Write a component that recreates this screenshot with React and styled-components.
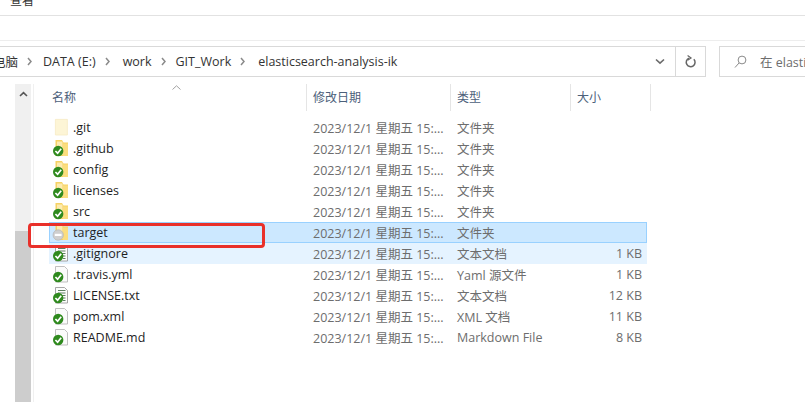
import React from 'react';
import styled, { createGlobalStyle } from 'styled-components';

const Global = createGlobalStyle`
  html, body { margin: 0; padding: 0; background: #fff; overflow: hidden; }
  body { font-family: "Open Sans", "Noto Sans CJK SC", sans-serif; }
  #root { width: 805px; height: 402px; }
`;
const Page = styled.div`
  width: 805px; height: 402px; display: flex; flex-direction: column; overflow: hidden; position: relative; background: #fff;
`;
const MenuBar = styled.div`
  height: 15px; border-bottom: 1px solid #e2e2e2; flex: none; padding-left: 10px; overflow: hidden;
`;
const MenuTab = styled.div`
  font-size: 12px; line-height: 16px; margin-top: -8px; color: #333; font-family: "Noto Sans CJK SC", sans-serif;
`;
const Ribbon = styled.div`
  height: 24px; border-bottom: 1px solid #ededed; flex: none;
`;
const AddressRow = styled.div`
  display: flex; height: 31px; margin-top: 5px; flex: none; margin-left: -2px;
`;
const AddressBox = styled.div`
  width: 678px; box-sizing: border-box; border: 1px solid #d9d9d9; border-left: none; display: flex; align-items: center;
`;
const Crumbs = styled.div`
  flex: 1; display: flex; align-items: center; font-size: 12.5px; color: #333; white-space: nowrap; overflow: hidden;
`;
const Crumb = styled.span`
  margin-left: ${p => p.$gap}px; font-family: "Open Sans", "Noto Sans CJK SC", sans-serif;
`;
const ChevronWrap = styled.svg`
  margin-left: 9px; flex: none;
`;
const Dropdown = styled.div`
  width: 30px; display: flex; align-items: center; justify-content: center; flex: none;
`;
const RefreshBox = styled.div`
  width: 31px; box-sizing: border-box; border: 1px solid #d9d9d9; margin-left: -1px; display: flex; align-items: center; justify-content: center; flex: none;
`;
const SearchBox = styled.div`
  margin-left: 13px; flex: 1; box-sizing: border-box; border: 1px solid #d9d9d9; border-right: none; display: flex; align-items: center; gap: 13px; padding-left: 14px;
  font-size: 12.5px; color: #6d6d6d; white-space: nowrap; min-width: 0; overflow: hidden; margin-right: -10px;
`;
const Body = styled.div`
  flex: 1; display: flex; margin-top: 7px; min-height: 0;
`;
const Scrollbar = styled.div`
  width: 16px; margin-left: 15px; background: #f0f0f0; display: flex; flex-direction: column; flex: none;
`;
const ScrollUp = styled.div`
  height: 19px; display: flex; align-items: center; justify-content: center; flex: none;
`;
const ScrollGap = styled.div`
  height: 128px; flex: none;
`;
const ScrollThumb = styled.div`
  flex: 1; background: #cdcdcd;
`;
const Pane = styled.div`
  flex: 1; margin-left: 2px; border-left: 1px solid #f0f0f0; padding-left: 15px; min-width: 0; position: relative;
`;
const Header = styled.div`
  display: grid; grid-template-columns: 258px 144px 120px 80px; width: 602px; height: 27px;
`;
const HeaderCell = styled.div`
  border-right: 1px solid #e5e5e5; padding-left: ${p => p.$pad}px; font-size: 12px; color: #4c607a; line-height: 26px;
  font-family: "Noto Sans CJK SC", sans-serif;
`;
const SortCaret = styled.svg`
  position: absolute; left: 138px; top: 1px;
`;
const List = styled.div`
  margin-top: 6px; width: 598px;
`;
const Row = styled.div`
  display: grid; grid-template-columns: 258px 144px 120px 1fr; height: 21px; box-sizing: border-box; align-items: center;
  font-size: 12.5px;
  background: ${p => (p.$state === 'selected' ? '#cce8ff' : p.$state === 'hover' ? '#e5f3ff' : 'transparent')};
  border: 1px solid ${p => (p.$state === 'selected' ? '#99d1ff' : p.$state === 'hover' ? '#e5f3ff' : 'transparent')};
`;
const NameCell = styled.div`
  display: flex; align-items: center; color: #1f1f1f; white-space: nowrap; padding-left: 2px; gap: 4px;
`;
const Cell = styled.div`
  color: #6d6d6d; white-space: nowrap; padding-left: ${p => p.$pad ?? 5}px;
  text-align: ${p => (p.$right ? 'right' : 'left')}; padding-right: ${p => (p.$right ? 4 : 0)}px;
`;
const Annotation = styled.div`
  position: absolute; left: 28px; top: 223px; width: 237px; height: 25px; box-sizing: border-box;
  border: 3px solid #e9302a; border-radius: 4px; pointer-events: none;
`;
const IconSvg = styled.svg`
  flex: none;
`;

function Chevron() {
  return (
    <ChevronWrap width="5" height="9" viewBox="0 0 5 9">
      <path d="M1 1 L4 4.5 L1 8" fill="none" stroke="#8a8a8a" strokeWidth="1.5" />
    </ChevronWrap>
  );
}

const Badge = ({ kind }) =>
  kind === 'ignored' ? (
    <g>
      <circle cx="6.2" cy="12" r="5.2" fill="#cfcfcf" stroke="#b0b0b0" strokeWidth="0.6" />
      <rect x="2.8" y="10.8" width="6.8" height="2.2" fill="#fff" />
    </g>
  ) : (
    <g>
      <circle cx="6.2" cy="12" r="5.2" fill="#2f8a1e" />
      <path d="M3.4 12 L5.6 14.2 L9.2 9.8" fill="none" stroke="#fff" strokeWidth="1.7" />
    </g>
  );

const FileIcon = ({ type }) => {
  let body;
  if (type === 'plainFolder') {
    body = <path d="M3.4 1.4 H15.4 V17 H3.4 Z" fill="#fdf5d6" stroke="#f6ebc4" strokeWidth="0.8" />;
  } else if (type === 'folder' || type === 'ignored') {
    body = (
      <g>
        <path d="M3.5 1 H10 L11.5 3.5 H16 V17 H3.5 Z" fill="#f6d264" />
        <path d="M5 2.5 H10.5 V16 H5 Z" fill="#fdebb0" />
        <path d="M11 4.5 H16 V17 H11 Z" fill="#fbdd7e" />
      </g>
    );
  } else if (type === 'lines') {
    body = (
      <g>
        <path d="M3.5 1.5 H12.5 L15.5 4.5 V17 H3.5 Z" fill="#fdfdfd" stroke="#909090" strokeWidth="0.8" />
        <path d="M6 4.5 H13.5 M6 7 H13.5 M9 9.5 H13.5 M11 12 H13.5 M11 14.5 H13.5" stroke="#5f7f62" strokeWidth="1" />
      </g>
    );
  } else {
    body = <path d="M3.5 1.5 H12.5 L15.5 4.5 V17 H3.5 Z" fill="#fbfbfb" stroke="#b0b0b0" strokeWidth="0.8" />;
  }
  return (
    <IconSvg width="17" height="19" viewBox="0 0 17 19">
      {body}
      {type === 'plainFolder' ? null : <Badge kind={type === 'ignored' ? 'ignored' : 'ok'} />}
    </IconSvg>
  );
};

const date = '2023/12/1 星期五 15:...';
const rows = [
  { name: '.git', icon: 'plainFolder', kind: '文件夹' },
  { name: '.github', icon: 'folder', kind: '文件夹' },
  { name: 'config', icon: 'folder', kind: '文件夹' },
  { name: 'licenses', icon: 'folder', kind: '文件夹' },
  { name: 'src', icon: 'folder', kind: '文件夹' },
  { name: 'target', icon: 'ignored', kind: '文件夹', state: 'selected' },
  { name: '.gitignore', icon: 'lines', kind: '文本文档', size: '1 KB', state: 'hover' },
  { name: '.travis.yml', icon: 'blank', kind: 'Yaml 源文件', size: '1 KB' },
  { name: 'LICENSE.txt', icon: 'lines', kind: '文本文档', size: '12 KB' },
  { name: 'pom.xml', icon: 'blank', kind: 'XML 文档', size: '11 KB' },
  { name: 'README.md', icon: 'blank', kind: 'Markdown File', size: '8 KB' },
];

export default function App() {
  return (
    <Page>
      <Global />
      <MenuBar><MenuTab>查看</MenuTab></MenuBar>
      <Ribbon />
      <AddressRow>
        <AddressBox>
          <Crumbs>
            <Crumb $gap={-5}>电脑</Crumb>
            <Chevron /><Crumb $gap={11}>DATA (E:)</Crumb>
            <Chevron /><Crumb $gap={13}>work</Crumb>
            <Chevron /><Crumb $gap={10}>GIT_Work</Crumb>
            <Chevron /><Crumb $gap={13}>elasticsearch-analysis-ik</Crumb>
          </Crumbs>
          <Dropdown>
            <svg width="10" height="7" viewBox="0 0 10 7"><path d="M1 1.5 L5 5.2 L9 1.5" fill="none" stroke="#6b6b6b" strokeWidth="1.6" /></svg>
          </Dropdown>
        </AddressBox>
        <RefreshBox>
          <svg width="13" height="14" viewBox="0 0 13 14"><path d="M9.8 4.2 A4.4 4.4 0 1 1 5 3.2" fill="none" stroke="#666" strokeWidth="1.5" /><path d="M3.6 0.6 L7 3 L3.6 5.2" fill="none" stroke="#666" strokeWidth="1.2" /></svg>
        </RefreshBox>
        <SearchBox>
          <svg width="13" height="14" viewBox="0 0 13 14"><circle cx="8" cy="5" r="3.9" fill="none" stroke="#8a8a8a" strokeWidth="1" /><path d="M5 8 L1 12.5" stroke="#8a8a8a" strokeWidth="1" /></svg>
          <span>在 elastic</span>
        </SearchBox>
      </AddressRow>
      <Body>
        <Scrollbar>
          <ScrollUp>
            <svg width="9" height="6" viewBox="0 0 9 6"><path d="M1 5 L4.5 1.6 L8 5" fill="none" stroke="#555" strokeWidth="1.6" /></svg>
          </ScrollUp>
          <ScrollGap />
          <ScrollThumb />
        </Scrollbar>
        <Pane>
          <SortCaret width="9" height="5" viewBox="0 0 9 5"><path d="M0.5 4.5 L4.5 0.8 L8.5 4.5" fill="none" stroke="#a0a0a0" strokeWidth="1" /></SortCaret>
          <Header>
            <HeaderCell $pad={3}>名称</HeaderCell>
            <HeaderCell $pad={6}>修改日期</HeaderCell>
            <HeaderCell $pad={6}>类型</HeaderCell>
            <HeaderCell $pad={6}>大小</HeaderCell>
          </Header>
          <List>
            {rows.map(r => (
              <Row key={r.name} $state={r.state}>
                <NameCell><FileIcon type={r.icon} /><span>{r.name}</span></NameCell>
                <Cell>{date}</Cell>
                <Cell>{r.kind}</Cell>
                <Cell $right $pad={0}>{r.size}</Cell>
              </Row>
            ))}
          </List>
        </Pane>
      </Body>
      <Annotation />
    </Page>
  );
}
